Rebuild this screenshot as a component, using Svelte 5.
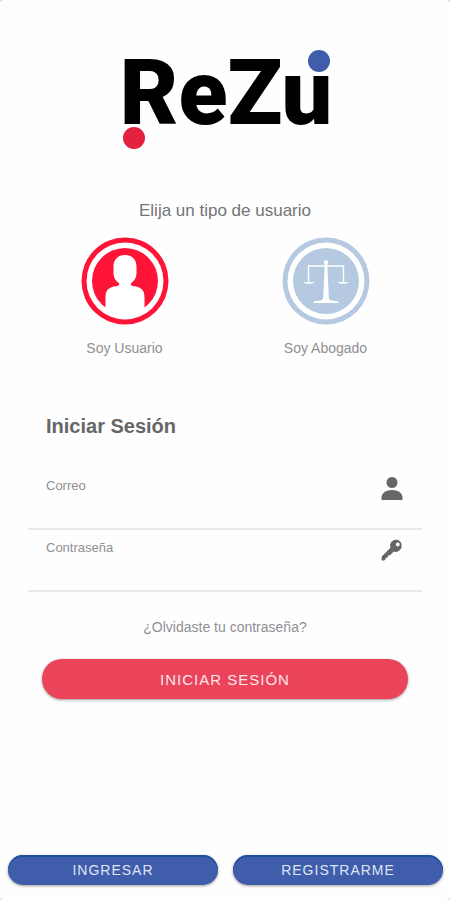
<script>
  let role = $state('usuario');
  let email = $state('');
  let password = $state('');
</script>

<main>
  <header>
    <svg class="logo" viewBox="0 0 216 104" role="img" aria-label="ReZu">
      <text x="109" y="76" text-anchor="middle">ReZu</text>
      <circle cx="17" cy="90" r="11" fill="#e3213f" />
      <circle cx="202" cy="13" r="11" fill="#3f5daa" />
    </svg>
  </header>

  <fieldset>
    <legend>Elija un tipo de usuario</legend>
    <div class="roles">
      <label>
        <input type="radio" name="role" value="usuario" bind:group={role} />
        <svg viewBox="0 0 88 88" aria-hidden="true">
          <circle cx="44" cy="44" r="43.5" fill="#fe1437" />
          <circle cx="44" cy="44" r="38.5" fill="#fff" />
          <circle cx="44" cy="44" r="33" fill="#fe1437" />
          <path
            fill="#fff"
            d="M44 18c-7 0-11.500 4.500-11.500 11.500v6.500c0 4.500 2 8 5.500 10.200.8 1.800-.8 2.800-3 3.100-7 .5-10.500 4.200-10.500 10.700v12.500C30 78 36 80 44 80s14-2 19.500-7.500V60c0-6.500-3.500-10.200-10.500-10.700-2.200-.3-3.800-1.300-3-3.100 3.500-2.200 5.500-5.700 5.500-10.200v-6.500C55.500 22.500 51 18 44 18z"
          />
        </svg>
        <span>Soy Usuario</span>
      </label>
      <label>
        <input type="radio" name="role" value="abogado" bind:group={role} />
        <svg viewBox="0 0 88 88" aria-hidden="true">
          <circle cx="44" cy="44" r="43.5" fill="#b5cae1" />
          <circle cx="44" cy="44" r="38.5" fill="#fff" />
          <circle cx="44" cy="44" r="33" fill="#b5cae1" />
          <g fill="#fff">
            <circle cx="44" cy="25.500" r="2.200" />
            <path d="M42.700 27h2.600l1.500 34c.2 1.800 2 2.500 5 2.700 3 .1 4.700.7 5 2.300H31.200c.3-1.600 2-2.200 5-2.300 3-.2 4.800-.9 5-2.700z" />
            <path d="M21.500 45h11c-.8 2.400-10.200 2.400-11 0zM55.500 45h11c-.8 2.400-10.200 2.400-11 0z" />
          </g>
          <path d="M26.500 45V29h35v16" fill="none" stroke="#fff" stroke-width="1.400" />
        </svg>
        <span>Soy Abogado</span>
      </label>
    </div>
  </fieldset>

  <form onsubmit={(event) => event.preventDefault()}>
    <h1>Iniciar Sesión</h1>
    <div class="field">
      <div class="entry">
        <label for="email">Correo</label>
        <input id="email" type="email" bind:value={email} />
      </div>
      <svg viewBox="0 0 24 24" aria-hidden="true">
        <circle cx="12" cy="6.500" r="5.500" />
        <path d="M1.500 24v-2.500c0-4.500 4.500-7.500 10.500-7.500s10.500 3 10.500 7.500V24z" />
      </svg>
    </div>
    <div class="field">
      <div class="entry">
        <label for="password">Contraseña</label>
        <input id="password" type="password" bind:value={password} />
      </div>
      <svg viewBox="0 0 24 24" aria-hidden="true">
        <path
          fill-rule="evenodd"
          d="M16.300 1.500a6.200 6.200 0 0 0-5.900 8.200L1.800 18.400l-.3 3.300 1.300 1 2.400-.7.400-2 2-.4.400-2 2-.4 3.800-3.600a6.200 6.200 0 1 0 2.500-12.100zM17.800 4.600a1.900 1.900 0 1 1 0 3.800 1.900 1.900 0 0 1 0-3.800z"
        />
      </svg>
    </div>
    <a href="#recuperar">¿Olvidaste tu contraseña?</a>
    <button class="submit" type="submit">INICIAR SESIÓN</button>
  </form>

  <footer>
    <button type="button">INGRESAR</button>
    <button type="button">REGISTRARME</button>
  </footer>
</main>

<style>
  :global(body) {
    margin: 0;
    background: #d8d8d8;
  }

  main {
    box-sizing: border-box;
    min-height: 100vh;
    display: flex;
    flex-direction: column;
    background: #fefefe;
    border-radius: 4px;
    font-family: "Liberation Sans", Arial, sans-serif;
    color: #8f9094;
  }

  header {
    display: flex;
    justify-content: center;
    padding-top: 48px;
  }

  .logo {
    width: 216px;
    height: 104px;
    overflow: visible;
  }

  .logo text {
    font-family: Roboto, "Open Sans", sans-serif;
    font-size: 90px;
    font-weight: 900;
    fill: #000;
  }

  fieldset {
    margin: 48px 24px 0;
    padding: 0;
    border: 0;
    min-width: 0;
  }

  legend {
    width: 100%;
    padding: 0;
    text-align: center;
    font-size: 17px;
    line-height: 22px;
    color: #747476;
  }

  .roles {
    display: grid;
    grid-template-columns: 1fr 1fr;
    margin-top: 15px;
  }

  .roles label {
    display: flex;
    flex-direction: column;
    align-items: center;
    gap: 13px;
    font-size: 14px;
    line-height: 20px;
    cursor: pointer;
  }

  .roles svg {
    width: 88px;
    height: 88px;
  }

  .roles input {
    position: absolute;
    opacity: 0;
    pointer-events: none;
  }

  .roles input:focus-visible + svg {
    outline: 2px solid #3f5daa;
    border-radius: 50%;
  }

  form {
    display: flex;
    flex-direction: column;
    margin: 56px 28px 0;
  }

  h1 {
    margin: 0 18px 30px;
    font-size: 20px;
    line-height: 24px;
    color: #666;
  }

  .field {
    display: flex;
    align-items: flex-start;
    height: 60px;
    padding: 0 18px;
    border-bottom: 2px solid #e8e8e8;
  }

  .entry {
    flex: 1;
    display: flex;
    flex-direction: column;
    padding-top: 8px;
    font-size: 13px;
  }

  .entry label {
    line-height: 20px;
  }

  .entry input {
    height: 28px;
    padding: 0;
    border: 0;
    outline: 0;
    background: transparent;
    font: inherit;
    font-size: 16px;
    color: #555;
  }

  .field svg {
    width: 24px;
    height: 24px;
    margin-top: 8px;
    fill: #666;
  }

  a {
    align-self: center;
    margin-top: 25px;
    font-size: 14px;
    line-height: 20px;
    color: inherit;
    text-decoration: none;
  }

  button {
    padding: 0;
    border: 0;
    border-radius: 20px;
    background: #3f5daa;
    box-shadow: 0 1px 3px rgba(0, 0, 0, 0.4);
    font: inherit;
    font-size: 14px;
    letter-spacing: 1px;
    color: #dfe5f5;
    cursor: pointer;
  }

  .submit {
    height: 40px;
    margin: 22px 14px 0;
    background: #eb445a;
    font-size: 15px;
    color: #fde6ea;
  }

  footer {
    display: grid;
    grid-template-columns: 1fr 1fr;
    gap: 15px;
    margin-top: auto;
    padding: 16px 7px 15px 8px;
  }

  footer button {
    height: 30px;
    box-shadow:
      inset 0 2px 0 #1f4fa0,
      0 1px 3px rgba(0, 0, 0, 0.4);
  }
</style>
